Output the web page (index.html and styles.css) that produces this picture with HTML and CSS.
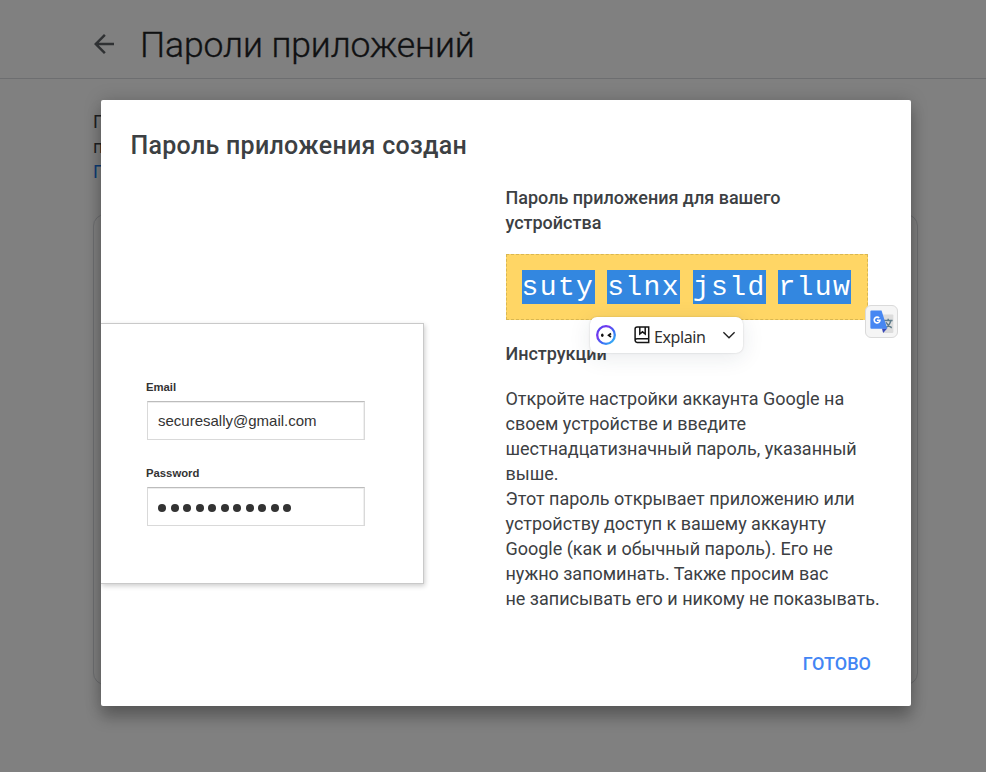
FILE: index.html
```html
<!DOCTYPE html>
<html lang="ru">
<head>
<meta charset="utf-8">
<title>Пароли приложений</title>
<link rel="stylesheet" href="styles.css">
</head>
<body>
<header class="header">
  <svg class="back" viewBox="0 0 24 24" width="30" height="30"><path d="M20 11H7.8l5.6-5.6L12 4l-8 8 8 8 1.4-1.4L7.8 13H20z" fill="#2f3133"/></svg>
  <h1>Пароли приложений</h1>
</header>
<main class="page">
  <div class="intro"><p>П</p><p>п</p><p class="link">П</p></div>
  <div class="card"></div>
</main>
<div class="dialog">
  <h2>Пароль приложения создан</h2>
  <div class="columns">
    <div class="preview">
      <div class="label">Email</div>
      <div class="field">securesally@gmail.com</div>
      <div class="label second">Password</div>
      <div class="field dots"><i></i><i></i><i></i><i></i><i></i><i></i><i></i><i></i><i></i><i></i><i></i></div>
    </div>
    <div class="details">
      <h3>Пароль приложения для вашего<br>устройства</h3>
      <div class="code"><span>suty</span><span>slnx</span><span>jsld</span><span>rluw</span></div>
      <h3 class="how">Инструкции</h3>
      <p>Откройте настройки аккаунта Google на<br>своем устройстве и введите<br>шестнадцатизначный пароль, указанный<br>выше.<br>Этот пароль открывает приложению или<br>устройству доступ к вашему аккаунту<br>Google (как и обычный пароль). Его не<br>нужно запоминать. Также просим вас<br>не&nbsp;записывать его и никому не показывать.</p>
    </div>
  </div>
  <div class="actions"><button>ГОТОВО</button></div>
</div>
<div class="explain">
  <svg class="bot" viewBox="0 0 20 20" width="20" height="20">
    <defs><linearGradient id="ring" x1="0" y1="0" x2="1" y2="1"><stop offset="0" stop-color="#3f4bf0"/><stop offset=".3" stop-color="#7a35ee"/><stop offset=".6" stop-color="#3a68f5"/><stop offset="1" stop-color="#36c5f5"/></linearGradient></defs>
    <circle cx="10" cy="10" r="8.8" fill="#fff" stroke="url(#ring)" stroke-width="2.3"/>
    <ellipse cx="6.3" cy="10.3" rx="1.3" ry="1.8" fill="#111"/><path d="M15 8.5l-2.4 1.8 2.4 1.7" fill="none" stroke="#111" stroke-width="1.7"/>
  </svg>
  <svg class="book" viewBox="0 0 16 18" width="16" height="18"><path d="M3.2 1H14.7V12.7H3.1Q1.1 12.9 1.1 14.6T3.1 16.6H14.7V12.7M1.1 14.6V3Q1.1 1 3.2 1M5.8 1V8L8.5 5.8 11.2 8V1" fill="none" stroke="#151515" stroke-width="1.5"/></svg>
  <span>Explain</span>
  <svg class="chevron" viewBox="0 0 14 8" width="14" height="8"><path d="M1.4 1.2L7 6.7l5.6-5.5" fill="none" stroke="#222" stroke-width="1.4"/></svg>
</div>
<div class="translate">
  <svg viewBox="0 0 24 24" width="24" height="24">
    <path d="M9 4.5H22.4Q23.4 4.5 23.4 5.5V22Q23.4 23 22.4 23H13z" fill="#dcdcdc"/>
    <path d="M14 10.5h8.6M18.2 8.7v1.8M20.8 10.7Q19.5 15.6 15.2 18M16 12.2Q17.8 16 21.8 17.8" fill="none" stroke="#607d8b" stroke-width="1.5"/>
    <path d="M12 18.5h5.2L13.1 23z" fill="#3b4ab8"/>
    <path d="M1.4.6H11.5L17.3 18.8H1.4Q.4 18.8.4 17.8V1.6Q.4.6 1.4.6z" fill="#4787f2"/>
    <path d="M9.2 8A2.9 2.9 0 1 0 10 10.2H7" fill="none" stroke="#fff" stroke-width="1.6"/>
  </svg>
</div>
</body>
</html>
```

FILE: styles.css
```css
* { box-sizing: border-box; }
body { margin: 0; height: 772px; overflow: hidden; background: #808080; font-family: Roboto, sans-serif; color: #3c4043; }
h1, h2, h3, p { margin: 0; }
.header { height: 79px; border-bottom: 1px solid #6d6e70; display: flex; align-items: flex-start; padding: 29px 0 0 89px; }
.header h1 { margin: -6px 0 0 21px; font-size: 35.5px; line-height: 44px; font-weight: 300; color: #101112; letter-spacing: -.1px; white-space: nowrap; -webkit-text-stroke: .35px #101112; }
.page { padding: 30px 0 0 93px; }
.intro { height: 105px; font-size: 18px; line-height: 25px; color: #1e2022; }
.intro .link { color: #0d3c75; }
.card { width: 825px; height: 471px; border: 1px solid #6d6e70; border-radius: 12px; }
.dialog { position: absolute; left: 101px; top: 100px; width: 810px; height: 606px; background: #fff; border-radius: 2px; box-shadow: 0 12px 15px rgba(0,0,0,.24), 0 0 18px rgba(0,0,0,.18); }
.dialog h2 { padding: 30px 0 0 29.5px; font-size: 25px; line-height: 32px; font-weight: 500; letter-spacing: .28px; white-space: nowrap; }
.columns { display: flex; padding-top: 23px; height: 449px; }
.preview { width: 323px; height: 261px; margin-top: 138px; padding: 56px 0 0 45px; border: 1px solid #c9c9c9; border-left: 0; box-shadow: 1px 2px 5px rgba(0,0,0,.2); clip-path: inset(-10px -10px -10px 0); font-family: "Liberation Sans", sans-serif; color: #333; }
.label { font-size: 11.3px; line-height: 14px; font-weight: 700; }
.label.second { margin-top: 26px; }
.field { width: 218px; height: 39px; margin-top: 7px; margin-left: 1px; padding-left: 10px; border: 1px solid #d9d9d9; border-top-color: #bcbcbc; box-shadow: inset 0 1px 0 #ededed, inset -1px 0 0 #f0f0f0; display: flex; align-items: center; font-size: 15px; }
.dots { gap: 4.5px; padding-top: 3px; }
.dots i { width: 8px; height: 8px; border-radius: 50%; background: #333; }
.details { margin-left: 81.5px; width: 376px; font-size: 18px; line-height: 25px; letter-spacing: -.01px; white-space: nowrap; }
.details h3 { font-size: 18px; line-height: 25px; font-weight: 500; }
.code { width: 362px; height: 66px; margin-top: 19px; padding: 15px; display: flex; gap: 12.6px; border: 1px dashed #d9b752; background: #ffd665; font-family: "Liberation Mono", monospace; font-size: 28px; line-height: 36px; color: #fff; }
.code span { width: 73.2px; height: 34px; background: #3387e0; letter-spacing: 1.4px; }
.details h3.how { margin-top: 21px; }
.details p { margin-top: 20px; }
.actions { display: flex; justify-content: flex-end; padding: 41px 40px 0 0; }
button { border: 0; background: none; padding: 0; font: 500 18px/24px Roboto, sans-serif; color: #4285f4; }
.explain { position: absolute; left: 590px; top: 317px; width: 153px; height: 36px; display: flex; align-items: center; background: #fff; border-radius: 7px; box-shadow: 0 0 2px rgba(0,0,0,.18), 0 4px 22px rgba(30,50,70,.1); padding-left: 6px; font-family: "Noto Sans", sans-serif; font-size: 16px; color: #303030; }
.book { margin-left: 18px; }
.explain span { margin: 4px 0 0 4px; width: 53px; letter-spacing: -.4px; }
.chevron { margin-left: 15px; }
.translate { position: absolute; left: 865px; top: 305px; width: 33px; height: 33px; border: 1px solid #dadada; border-radius: 6px; background: #f5f5f5; display: flex; align-items: center; padding-left: 4px; }
```
